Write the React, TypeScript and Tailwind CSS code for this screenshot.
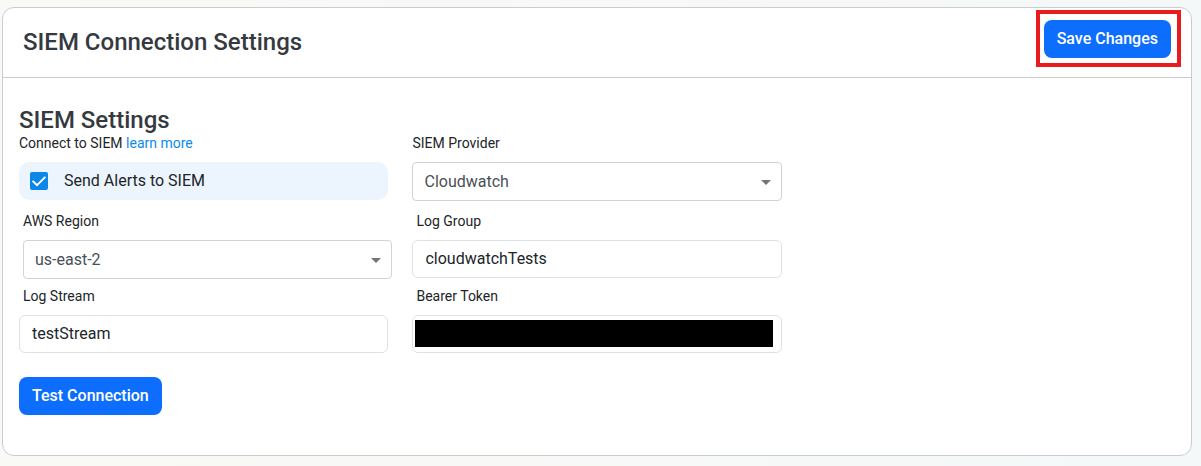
import { useState } from 'react';
import type { ReactNode } from 'react';

const PROVIDERS = ['Cloudwatch', 'Splunk', 'Datadog'];
const REGIONS = ['us-east-1', 'us-east-2', 'us-west-1', 'us-west-2'];

const INPUT_CLASS =
  'block h-[38px] w-full rounded-md border border-[#dee2e6] bg-white px-3 pb-0.5 text-base text-[#212529] focus:border-[#0d6efd] focus:outline-none';

const BUTTON_CLASS =
  'h-[38px] rounded-lg bg-[#0d6efd] px-[13px] text-base font-medium text-white hover:bg-[#0b5ed7]';

type SelectProps = {
  id: string;
  value: string;
  options: string[];
  onChange: (value: string) => void;
};

function Select({ id, value, options, onChange }: SelectProps) {
  return (
    <div className="relative">
      <select
        id={id}
        value={value}
        onChange={(e) => onChange(e.target.value)}
        className="block h-[39px] w-full appearance-none rounded-[4px] border border-[#ced4da] bg-white pr-8 pl-[11px] text-base text-[#495057] focus:outline-none"
      >
        {options.map((option) => (
          <option key={option}>{option}</option>
        ))}
      </select>
      <svg viewBox="0 0 10 5" className="pointer-events-none absolute top-[18px] right-[11px] h-[5px] w-[10px]">
        <path d="M0 0h10L5 5z" fill="#757575" />
      </svg>
    </div>
  );
}

function FieldLabel({ htmlFor, children }: { htmlFor: string; children: ReactNode }) {
  return (
    <label htmlFor={htmlFor} className="mb-[9px] block pl-1 text-sm">
      {children}
    </label>
  );
}

export default function App() {
  const [sendAlerts, setSendAlerts] = useState(true);
  const [provider, setProvider] = useState('Cloudwatch');
  const [region, setRegion] = useState('us-east-2');
  const [logGroup, setLogGroup] = useState('cloudwatchTests');
  const [logStream, setLogStream] = useState('testStream');
  const [token, setToken] = useState('');

  return (
    <div className="flex min-h-screen flex-col bg-linear-to-r from-[#f9f9f5] to-[#f5f8f9] pt-[7px] pr-[9px] pb-[10px] pl-[2px] font-[Roboto,sans-serif] text-[#212529]">
      <main className="grow rounded-xl border border-[#cccccc] bg-white">
        {/* Header */}
        <header className="flex items-start justify-between border-b border-[#cccccc] pt-3 pr-5 pb-[19px] pl-5">
          <h1 className="pt-[6px] text-2xl leading-8 font-medium text-[#343a40]">SIEM Connection Settings</h1>
          <div className="relative">
            <button type="button" className={BUTTON_CLASS}>
              Save Changes
            </button>
            <span className="pointer-events-none absolute -top-[10px] -right-[10px] -bottom-[9px] -left-2 border-4 border-[#e81c1f]" />
          </div>
        </header>

        {/* Settings form */}
        <form className="px-4 pt-[29px] pb-10" onSubmit={(e) => e.preventDefault()}>
          <h2 className="text-2xl leading-[26px] font-medium text-[#343a40]">SIEM Settings</h2>

          <div className="grid w-[66%] grid-cols-2 gap-x-6">
            <div>
              <p className="mb-[9px] text-sm">
                Connect to SIEM{' '}
                <a href="#" className="text-[#0d8be8] hover:underline">
                  learn more
                </a>
              </p>
              <label className="flex h-[38px] items-center rounded-[10px] bg-[#ecf5fd] pl-[11px] text-base">
                <span className="relative mr-4 block size-[18px]">
                  <input
                    type="checkbox"
                    checked={sendAlerts}
                    onChange={(e) => setSendAlerts(e.target.checked)}
                    className="block size-[18px] appearance-none rounded-[2px] border-2 border-[#0c87e8] bg-white checked:bg-[#0c87e8]"
                  />
                  {sendAlerts && (
                    <svg viewBox="0 0 18 18" className="pointer-events-none absolute inset-0 size-[18px]">
                      <path d="M2.6 8.8 7 13.2 15.4 4.8" fill="none" stroke="#fff" strokeWidth="1.9" />
                    </svg>
                  )}
                </span>
                Send Alerts to SIEM
              </label>
            </div>

            <div>
              <label htmlFor="provider" className="mb-[9px] block text-sm">
                SIEM Provider
              </label>
              <Select id="provider" value={provider} options={PROVIDERS} onChange={setProvider} />
            </div>

            <div className="mt-[10px]">
              <FieldLabel htmlFor="region">AWS Region</FieldLabel>
              <div className="-mr-1 ml-1">
                <Select id="region" value={region} options={REGIONS} onChange={setRegion} />
              </div>
            </div>

            <div className="mt-[10px]">
              <FieldLabel htmlFor="log-group">Log Group</FieldLabel>
              <input
                id="log-group"
                type="text"
                value={logGroup}
                onChange={(e) => setLogGroup(e.target.value)}
                className={INPUT_CLASS}
              />
            </div>

            <div className="mt-[7px]">
              <FieldLabel htmlFor="log-stream">Log Stream</FieldLabel>
              <input
                id="log-stream"
                type="text"
                value={logStream}
                onChange={(e) => setLogStream(e.target.value)}
                className={INPUT_CLASS}
              />
            </div>

            <div className="mt-[7px]">
              <FieldLabel htmlFor="token">Bearer Token</FieldLabel>
              <div className="relative">
                <input
                  id="token"
                  type="text"
                  value={token}
                  onChange={(e) => setToken(e.target.value)}
                  className={INPUT_CLASS}
                />
                {/* the token is never shown */}
                <span className="pointer-events-none absolute top-[5px] right-[9px] bottom-[6px] left-[3px] bg-black" />
              </div>
            </div>
          </div>

          <button type="button" className={`${BUTTON_CLASS} mt-6`}>
            Test Connection
          </button>
        </form>
      </main>
    </div>
  );
}
